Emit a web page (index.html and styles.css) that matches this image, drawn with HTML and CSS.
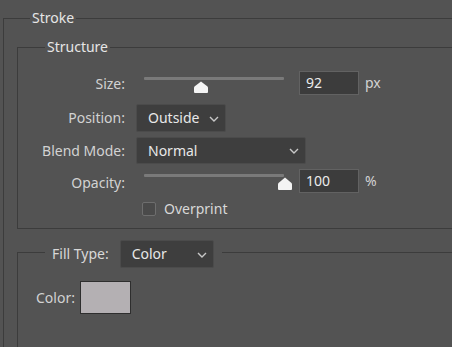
FILE: index.html
```html
<!DOCTYPE html>
<html>
<head>
<meta charset="utf-8">
<link rel="stylesheet" href="styles.css">
</head>
<body>
<fieldset class="group group-stroke">
  <legend class="group-title title-stroke">Stroke</legend>
  <fieldset class="group group-structure">
    <legend class="group-title title-structure">Structure</legend>

    <div class="row row-size">
      <span class="row-label">Size:</span>
      <div class="slider">
        <div class="slider-track"></div>
        <svg class="slider-thumb" style="left:49px" width="16" height="12" viewBox="0 0 16 12"><path d="M8 0.5 L14.5 5.5 Q15 6 15 7 L15 11 Q15 12 14 12 L2 12 Q1 12 1 11 L1 7 Q1 6 1.5 5.5 Z" fill="#f4f4f4"/></svg>
      </div>
      <div class="num-input">92</div>
      <span class="unit">px</span>
    </div>

    <div class="row row-position">
      <span class="row-label">Position:</span>
      <div class="select select-position">
        <span>Outside</span>
        <svg class="chevron" width="10" height="6" viewBox="0 0 10 6"><polyline points="1,1 5,5 9,1" fill="none" stroke="#c8c8c8" stroke-width="1.4"/></svg>
      </div>
    </div>

    <div class="row row-blend">
      <span class="row-label">Blend Mode:</span>
      <div class="select select-blend">
        <span>Normal</span>
        <svg class="chevron" width="10" height="6" viewBox="0 0 10 6"><polyline points="1,1 5,5 9,1" fill="none" stroke="#c8c8c8" stroke-width="1.4"/></svg>
      </div>
    </div>

    <div class="row row-opacity">
      <span class="row-label">Opacity:</span>
      <div class="slider slider-opacity">
        <div class="slider-track"></div>
        <svg class="slider-thumb" style="left:133px" width="16" height="13" viewBox="0 0 16 13"><path d="M8 0.5 L14.5 6 Q15 6.5 15 7.5 L15 12 Q15 13 14 13 L2 13 Q1 13 1 12 L1 7.5 Q1 6.5 1.5 6 Z" fill="#f4f4f4"/></svg>
      </div>
      <div class="num-input">100</div>
      <span class="unit">%</span>
    </div>

    <div class="row row-overprint">
      <span class="row-spacer"></span>
      <span class="checkbox"></span>
      <span class="check-label">Overprint</span>
    </div>
  </fieldset>

  <fieldset class="group group-fill">
    <legend class="fill-legend">
      <span class="fill-label">Fill Type:</span>
      <div class="select select-fill">
        <span>Color</span>
        <svg class="chevron" width="10" height="6" viewBox="0 0 10 6"><polyline points="1,1 5,5 9,1" fill="none" stroke="#c8c8c8" stroke-width="1.4"/></svg>
      </div>
    </legend>
    <div class="color-row">
      <span class="color-label">Color:</span>
      <span class="swatch"></span>
    </div>
  </fieldset>
</fieldset>
</body>
</html>
```

FILE: styles.css
```css
html, body {
  margin: 0;
  padding: 0;
  background: #535353;
  overflow: hidden;
  height: 100%;
}

body {
  font-family: "Noto Sans", "DejaVu Sans", sans-serif;
  font-size: 14px;
  line-height: 18px;
  color: #d2d2d2;
}

.group {
  border: 1px solid #3c3c3c;
  padding: 0;
  min-width: 0;
}

.group-stroke {
  margin: 9px -40px 0 3px;
  padding-bottom: 80px;
}

.group-title {
  padding: 0 2px;
  line-height: 18px;
  color: #e6e6e6;
}

.title-stroke {
  margin-left: 26px;
}

.group-structure {
  margin: 11px -40px 0 13px;
  padding: 15px 0 12px 0;
}

.title-structure {
  margin-left: 27px;
}

.row {
  display: flex;
  align-items: center;
}

.row-label,
.row-spacer {
  width: 107px;
  margin-right: 11px;
  text-align: right;
  flex: none;
}

.row-size .row-label {
  margin-top: 2px;
}

.row-opacity .row-label {
  margin-top: 4px;
}

.row-position { margin-top: 9px; }
.row-blend { margin-top: 5px; }
.row-opacity { margin-top: 5px; }
.row-overprint { margin-top: 9px; height: 14px; }

.slider {
  position: relative;
  width: 140px;
  height: 24px;
  margin-left: 8px;
  flex: none;
}

.slider-track {
  position: absolute;
  left: 0;
  right: 0;
  top: 6px;
  height: 3px;
  background: #7a7a7a;
  border-radius: 1px;
}

.slider-thumb {
  position: absolute;
  top: 10px;
}

.slider-opacity .slider-track {
  top: 5px;
}

.slider-opacity .slider-thumb {
  top: 8px;
}

.num-input {
  box-sizing: border-box;
  width: 60px;
  height: 24px;
  margin-left: 15px;
  padding-left: 6px;
  background: #3c3c3c;
  border: 1px solid #626262;
  color: #ececec;
  line-height: 22px;
  flex: none;
}

.unit {
  margin-left: 6px;
}

.select {
  box-sizing: border-box;
  display: flex;
  align-items: center;
  justify-content: space-between;
  height: 28px;
  padding: 0 6px 0 11px;
  background: #3e3e3e;
  border: 1px solid #4b4b4b;
  border-radius: 2px;
  color: #e8e8e8;
  flex: none;
}

.select-position { width: 90px; }
.select-blend { width: 170px; height: 27px; }
.select-fill { width: 94px; margin-left: 11px; }

.chevron {
  display: block;
  margin-top: 1px;
}

.checkbox {
  box-sizing: border-box;
  width: 14px;
  height: 14px;
  margin-left: 6px;
  background: #4a4a4a;
  border: 1px solid #6e6e6e;
  border-radius: 2px;
  flex: none;
}

.check-label {
  margin-left: 8px;
  color: #d8d8d8;
}

.group-fill {
  margin: 7px -40px 0 13px;
  padding: 0 0 60px 0;
}

.fill-legend {
  display: flex;
  align-items: center;
  margin-left: 27px;
  padding: 4px 8px 0 7px;
}

.fill-label {
  color: #d8d8d8;
}

.color-row {
  display: flex;
  align-items: center;
  padding: 13px 0 0 18px;
}

.swatch {
  box-sizing: border-box;
  width: 51px;
  height: 33px;
  margin-left: 5px;
  background: #b4b0b3;
  border: 1px solid #2e2e2e;
}
```
